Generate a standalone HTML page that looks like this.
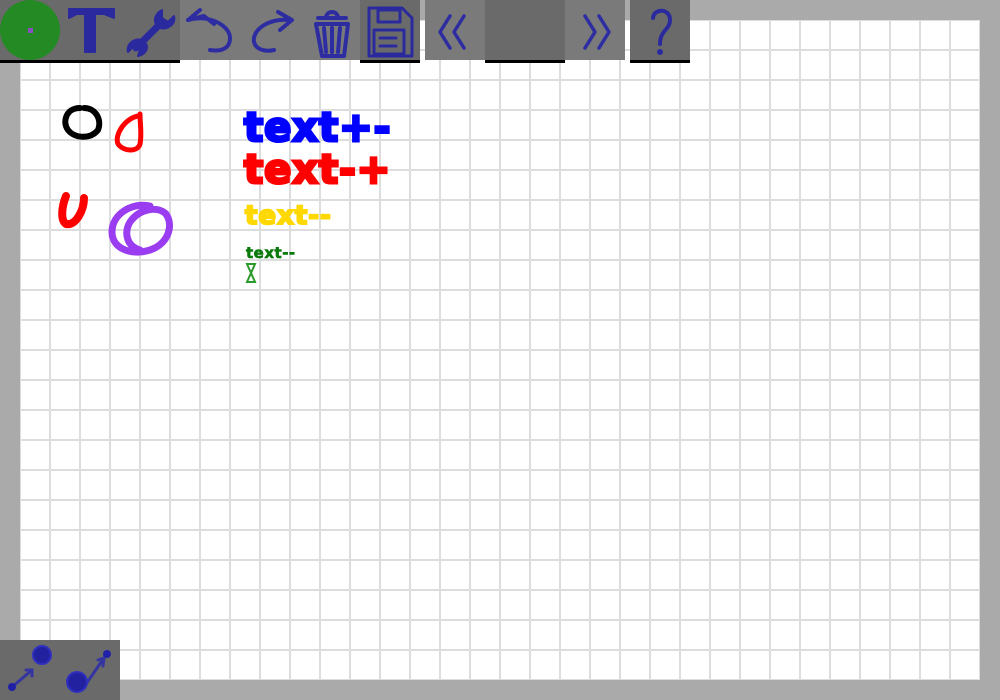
<!DOCTYPE html>
<html><head><meta charset="utf-8"><style>
html,body{margin:0;padding:0}
body{width:1000px;height:700px;position:relative;overflow:hidden;background:#aaa;font-family:"Liberation Sans",sans-serif}
#paper{position:absolute;left:20px;top:20px;width:960px;height:660px;background-color:#fff;
background-image:linear-gradient(to right,#ddd 2px,transparent 2px),linear-gradient(to bottom,#ddd 2px,transparent 2px);
background-size:30px 30px;background-position:29px 29px}
.seg{position:absolute;top:0;height:60px}
.d{background:#6a6a6a}
.l{background:#7a7a7a}
.ul{position:absolute;top:60px;height:3px;background:#000}
svg{position:absolute}
.t{position:absolute;font-weight:bold;font-family:"DejaVu Sans","Liberation Sans",sans-serif;white-space:nowrap}
</style></head><body>
<div id="paper"></div>

<svg width="1000" height="700" style="left:0;top:0">
<g fill="none" stroke-linecap="round" stroke-linejoin="round">
<path d="M80 108 C66 108 62 122 68 130 C74 138 90 140 98 130 C102 120 96 108 84 108" stroke="#000" stroke-width="6"/>
<path d="M138 116 C126 118 114 134 118 144 C124 152 138 152 140 144 C142 134 140 124 140 114" stroke="#f00" stroke-width="5"/>
<path d="M66 196 C62 206 60 220 66 224 C76 226 84 210 84 198" stroke="#f00" stroke-width="8"/>
<path d="M150 206 C132 202 112 214 112 232 C112 248 130 256 150 250 C168 244 174 226 166 214 C158 206 140 208 130 222 C124 232 126 246 140 250" stroke="#9a3df0" stroke-width="7"/>
</g>
<g fill="none" stroke="#2a9a2a" stroke-width="2"><path d="M247 264 L255 264 L247 282 L255 282 Z"/></g>
</svg>

<div class="t" style="left:244px;top:105px;font-size:40px;letter-spacing:1px;color:#00f;-webkit-text-stroke:3px #00f">text+-</div>
<div class="t" style="left:244px;top:147px;font-size:40px;letter-spacing:1px;color:#f00;-webkit-text-stroke:3px #f00">text-+</div>
<div class="t" style="left:245px;top:201px;font-size:26px;letter-spacing:1px;color:#ffd800;-webkit-text-stroke:2px #ffd800">text--</div>
<div class="t" style="left:246px;top:244px;font-size:15px;letter-spacing:0.5px;color:#0a7a0a;-webkit-text-stroke:0.6px #0a7a0a">text--</div>

<!-- toolbar -->
<div class="seg d" style="left:0;width:180px"></div>
<div class="seg l" style="left:180px;width:180px"></div>
<div class="seg d" style="left:360px;width:60px"></div>
<div class="seg l" style="left:425px;width:60px"></div>
<div class="seg d" style="left:485px;width:80px"></div>
<div class="seg l" style="left:565px;width:60px"></div>
<div class="seg d" style="left:630px;width:60px"></div>
<div class="ul" style="left:0;width:180px"></div>
<div class="ul" style="left:360px;width:60px"></div>
<div class="ul" style="left:485px;width:80px"></div>
<div class="ul" style="left:630px;width:60px"></div>

<svg width="700" height="62" style="left:0;top:0">
<ellipse cx="30" cy="30" rx="30" ry="30" fill="#248a24"/>
<rect x="28" y="28" width="5" height="5" fill="#8a50c0"/>
<g fill="none" stroke="#2020a8" stroke-linecap="round" stroke-linejoin="round" opacity="0.85">
<path d="M69 9 L114 9 L114 18 L104 14 L95 14 L95 52 L85 52 L85 14 L77 14 L69 18 Z" fill="#2020a8" stroke-width="2"/>
<path d="M136 48 L162 22" stroke-width="7"/>
<path d="M162 10 C154 14 152 24 160 28 C168 30 176 24 174 16 L168 22 L162 18 Z" fill="#2020a8" stroke-width="2"/>
<path d="M138 56 C148 54 150 44 142 40 C134 38 126 44 128 52 L134 46 L140 50 Z" fill="#2020a8" stroke-width="2"/>
<path d="M188 20 L204 16 L214 24 M188 20 L200 10 M188 20 C210 14 230 26 230 38 C230 48 222 52 210 50" stroke-width="4"/>
<path d="M292 20 L278 12 M292 20 L280 30 M290 20 C268 18 252 30 254 42 C256 50 266 52 274 50" stroke-width="4"/>
<path d="M318 18 L346 18 M326 18 C326 10 338 10 338 18 M316 24 L348 24 L344 56 L322 56 Z M324 28 L326 52 M332 28 L332 52 M340 28 L338 52" stroke-width="4"/>
<path d="M369 8 L402 8 L412 18 L412 56 L369 56 Z M378 10 L400 10 L400 22 L378 22 Z M374 30 L404 30 L404 54 L374 54 Z M380 38 L396 38 M380 46 L396 46" stroke-width="3"/>
<path d="M450 16 L440 32 L450 48 M464 16 L454 32 L464 48" stroke-width="3.5"/>
<path d="M585 16 L595 32 L585 48 M599 16 L609 32 L599 48" stroke-width="3.5"/>
<path d="M653 18 C654 8 670 8 670 20 C670 30 660 30 660 44" stroke-width="4"/>
<circle cx="660" cy="52" r="2.5" fill="#2020a8"/>
</g>
</svg>

<!-- bottom-left panel -->
<div style="position:absolute;left:0;top:640px;width:120px;height:60px;background:#6a6a6a"></div>
<svg width="120" height="60" style="left:0;top:640px">
<g stroke="#2828b0" fill="none" stroke-width="3" opacity="0.8" stroke-linecap="round">
<path d="M12 47 L32 30 M26 30 L32 30 L32 36"/>
<path d="M84 47 L104 18 M98 20 L104 18 L103 26"/>
</g>
<circle cx="12" cy="47" r="4" fill="#2020a8"/>
<circle cx="42" cy="15" r="9" fill="#2222a0" stroke="#3030c0" stroke-width="2"/>
<circle cx="77" cy="42" r="10" fill="#2222a0" stroke="#3030c0" stroke-width="2"/>
<circle cx="107" cy="14" r="4" fill="#2020a8"/>
</svg>
</body></html>
